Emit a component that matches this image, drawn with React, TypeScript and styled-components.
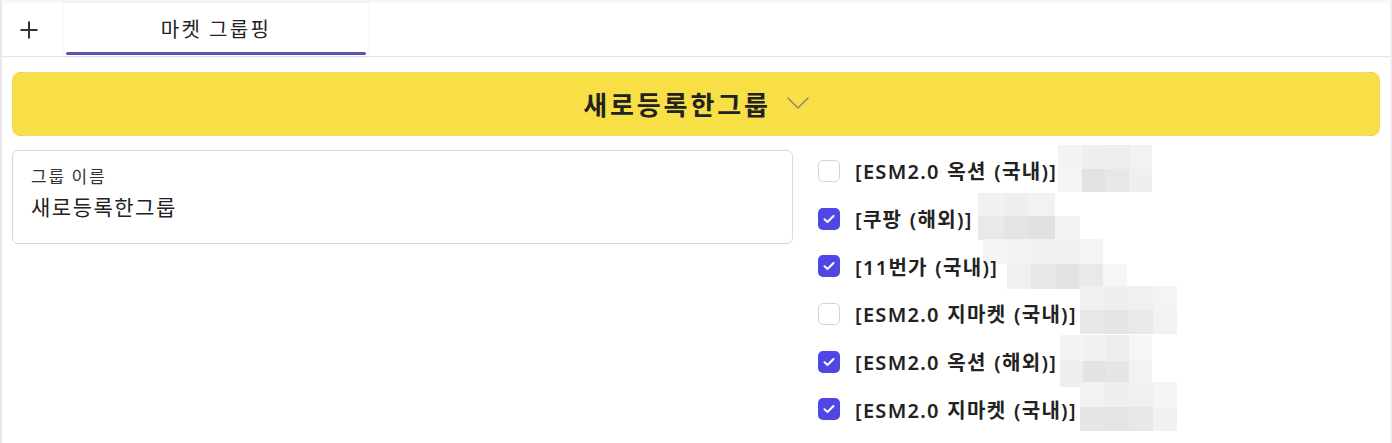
import React from "react";
import styled, { createGlobalStyle } from "styled-components";

const Global = createGlobalStyle`
  html, body { margin: 0; padding: 0; background: #ffffff; }
  body { font-family: "Noto Sans", "Noto Sans CJK KR", sans-serif; color: #222; }
  * { box-sizing: border-box; }
`;

const Page = styled.div`
  width: 1392px;
  height: 443px;
  overflow: hidden;
  border-left: 2px solid #e9e9e9;
  border-right: 2px solid #efefef;
  background: #fff;
`;

const Header = styled.div`
  height: 57px;
  display: flex;
  align-items: stretch;
  border-top: 3px solid #f7f7f7;
  border-bottom: 1px solid #e4e4e4;
  box-shadow: 0 1px 2px rgba(0, 0, 0, 0.04);
`;

const PlusButton = styled.button`
  width: 62px;
  border: none;
  background: transparent;
  display: flex;
  align-items: center;
  justify-content: center;
  padding: 0 8px 0 0;
  color: #333;
`;

const Tab = styled.div`
  width: 304px;
  position: relative;
  display: flex;
  align-items: center;
  justify-content: center;
  font-family: "Noto Sans CJK KR", sans-serif;
  font-size: 20px;
  letter-spacing: 2.3px;
  color: #222;
  background: #fff;
  box-shadow: 0 0 3px rgba(0, 0, 0, 0.08);
  padding-bottom: 3px;
  &::after {
    content: "";
    position: absolute;
    left: 2px;
    right: 2px;
    bottom: 1px;
    height: 3px;
    border-radius: 2px;
    background: #5553b8;
  }
`;

const Content = styled.div`
  padding: 15px 10px 0 10px;
`;

const Banner = styled.div`
  height: 64px;
  border-radius: 8px;
  background: #f7df45;
  border: 1px solid #eed76a;
  display: flex;
  align-items: center;
  justify-content: center;
  gap: 16px;
  padding-bottom: 2px;
`;

const BannerTitle = styled.span`
  font-family: "Noto Sans CJK KR", sans-serif;
  font-weight: 700;
  font-size: 26px;
  letter-spacing: 2.9px;
  color: #222;
`;

const Body = styled.div`
  display: grid;
  grid-template-columns: 781px 1fr;
  column-gap: 25px;
  margin-top: 14px;
`;

const Card = styled.div`
  height: 94px;
  border: 1px solid #d9d9d9;
  border-radius: 6px;
  padding: 14px 18px;
  display: flex;
  flex-direction: column;
  gap: 6px;
`;

const CardLabel = styled.div`
  font-family: "Noto Sans CJK KR", sans-serif;
  font-size: 17px;
  line-height: 22px;
  letter-spacing: 1.8px;
  color: #333;
`;

const CardValue = styled.div`
  font-family: "Noto Sans CJK KR", sans-serif;
  font-size: 21px;
  line-height: 27px;
  letter-spacing: 1.5px;
  color: #222;
`;

const List = styled.div`
  display: flex;
  flex-direction: column;
  margin-top: -3px;
`;

const Row = styled.label`
  position: relative;
  height: 47.7px;
  display: flex;
  align-items: center;
  gap: 15px;
`;

const Box = styled.span<{ $checked: boolean }>`
  width: 22px;
  height: 22px;
  border-radius: 5px;
  flex: none;
  display: flex;
  align-items: center;
  justify-content: center;
  background: ${(p) => (p.$checked ? "#4f46e5" : "#fff")};
  border: ${(p) => (p.$checked ? "none" : "1.5px solid #d4d4d4")};
`;

const RowText = styled.span`
  position: relative;
  z-index: 1;
  font-family: "Noto Sans", "Noto Sans CJK KR", sans-serif;
  font-weight: 600;
  font-size: 20px;
  letter-spacing: 1.3px;
  word-spacing: 1px;
  color: #222;
  white-space: nowrap;
`;

const Mosaic = styled.div<{ $cols: number }>`
  position: absolute;
  display: grid;
  grid-template-columns: repeat(${(p) => p.$cols}, 1fr);
  grid-auto-rows: 1fr;
  z-index: 0;
`;

const Cell = styled.div<{ $c: string }>`
  background: ${(p) => p.$c};
`;

const Chevron = () => (
  <svg width="22" height="12" viewBox="0 0 22 12" fill="none">
    <path d="M1 1l10 10L21 1" stroke="#8a8a7a" strokeWidth="1.5" strokeLinecap="round" strokeLinejoin="round" />
  </svg>
);

const Plus = () => (
  <svg width="20" height="20" viewBox="0 0 20 20" fill="none">
    <path d="M10 1.5v17M1.5 10h17" stroke="#333" strokeWidth="2" />
  </svg>
);

const Check = () => (
  <svg width="12" height="10" viewBox="0 0 12 10" fill="none">
    <path d="M1.5 5.2l3 2.8 6-6" stroke="#fff" strokeWidth="2" strokeLinecap="round" strokeLinejoin="round" />
  </svg>
);

type MosaicSpec = { left: number; top: number; w: number; h: number; cols: number; cells: string[] };

const items: { label: string; checked: boolean; mosaic: MosaicSpec }[] = [
  {
    label: "[ESM2.0 옥션 (국내)]",
    checked: false,
    mosaic: {
      left: 240, top: -2, w: 94, h: 47, cols: 4,
      cells: ["#f3f3f3", "#efefef", "#ededed", "#f2f2f2", "#f4f4f4", "#e2e2e2", "#e7e7e7", "#efefef"],
    },
  },
  {
    label: "[쿠팡 (해외)]",
    checked: true,
    mosaic: {
      left: 160, top: -2, w: 102, h: 47, cols: 4,
      cells: ["#f1f1f1", "#efefef", "#f2f2f2", "#ffffff", "#e9e9e9", "#e4e4e4", "#e0e0e0", "#f3f3f3"],
    },
  },
  {
    label: "[11번가 (국내)]",
    checked: true,
    mosaic: {
      left: 165, top: -3, w: 144, h: 50, cols: 6,
      cells: ["#f5f5f5", "#f2f2f2", "#f0f0f0", "#f1f1f1", "#f4f4f4", "#ffffff", "#ffffff", "#f0f0f0", "#e7e7e7", "#e3e3e3", "#e9e9e9", "#f6f6f6"],
    },
  },
  {
    label: "[ESM2.0 지마켓 (국내)]",
    checked: false,
    mosaic: {
      left: 262, top: -4, w: 97, h: 48, cols: 4,
      cells: ["#f1f1f1", "#efefef", "#f0f0f0", "#f4f4f4", "#e8e8e8", "#e5e5e5", "#e9e9e9", "#f2f2f2"],
    },
  },
  {
    label: "[ESM2.0 옥션 (해외)]",
    checked: true,
    mosaic: {
      left: 242, top: -3, w: 92, h: 52, cols: 4,
      cells: ["#f3f3f3", "#f1f1f1", "#eeeeee", "#f6f6f6", "#eeeeee", "#e3e3e3", "#e6e6e6", "#f2f2f2"],
    },
  },
  {
    label: "[ESM2.0 지마켓 (국내)]",
    checked: true,
    mosaic: {
      left: 262, top: -3, w: 97, h: 49, cols: 4,
      cells: ["#f2f2f2", "#efefef", "#f0f0f0", "#f5f5f5", "#e6e6e6", "#e4e4e4", "#e8e8e8", "#f1f1f1"],
    },
  },
];

export default function App() {
  return (
    <>
      <Global />
      <Page>
        <Header>
          <PlusButton aria-label="add">
            <Plus />
          </PlusButton>
          <Tab>마켓 그룹핑</Tab>
        </Header>
        <Content>
          <Banner>
            <BannerTitle>새로등록한그룹</BannerTitle>
            <Chevron />
          </Banner>
          <Body>
            <Card>
              <CardLabel>그룹 이름</CardLabel>
              <CardValue>새로등록한그룹</CardValue>
            </Card>
            <List>
              {items.map((it, i) => (
                <Row key={i}>
                  <Box $checked={it.checked}>{it.checked && <Check />}</Box>
                  <RowText>{it.label}</RowText>
                  <Mosaic
                    $cols={it.mosaic.cols}
                    style={{ left: it.mosaic.left, top: it.mosaic.top, width: it.mosaic.w, height: it.mosaic.h }}
                  >
                    {it.mosaic.cells.map((c, j) => (
                      <Cell key={j} $c={c} />
                    ))}
                  </Mosaic>
                </Row>
              ))}
            </List>
          </Body>
        </Content>
      </Page>
    </>
  );
}
